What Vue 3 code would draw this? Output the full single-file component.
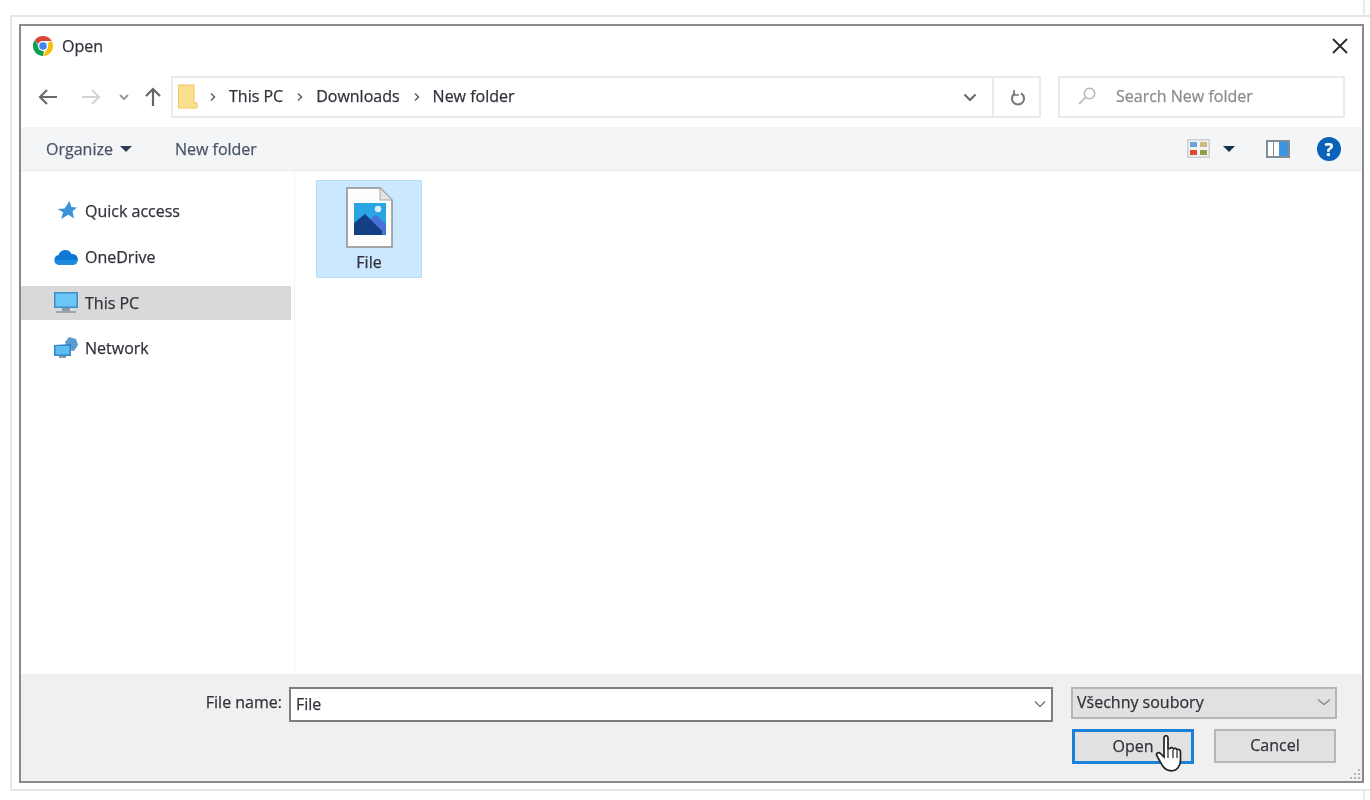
<script setup>
const crumbs = ['This PC', 'Downloads', 'New folder'];
const places = [
  { name: 'Quick access', icon: 'star' },
  { name: 'OneDrive', icon: 'cloud' },
  { name: 'This PC', icon: 'pc', active: true },
  { name: 'Network', icon: 'net' }
];
</script>

<template>
  <div class="page">
    <div class="tick"></div>
    <div class="frame">
      <div class="dialog">
        <div class="titlebar">
          <svg class="chrome" width="20" height="20" viewBox="0 0 20 20">
            <path fill="#db4437" d="M10 0a10 10 0 0 1 8.7 5H10a5 5 0 0 0-4.8 3.6L1.9 4.1A10 10 0 0 1 10 0z"/>
            <path fill="#f4c20d" d="M18.7 5A10 10 0 0 1 10 20l4.3-7.5A5 5 0 0 0 14.3 7.5L18.7 5z"/>
            <path fill="#0f9d58" d="M1.9 4.1l4.3 7.5A5 5 0 0 0 11 14.9L10 20A10 10 0 0 1 1.9 4.1z"/>
            <circle cx="10" cy="10" r="5" fill="#fff"/>
            <circle cx="10" cy="10" r="3.8" fill="#4285f4"/>
          </svg>
          <span class="title">Open</span>
          <svg class="close" width="16" height="16" viewBox="0 0 16 16"><path d="M1 1l14 14M15 1L1 15" stroke="#2b2b2b" stroke-width="1.8" fill="none"/></svg>
        </div>

        <div class="navrow">
          <div class="navbtns">
            <svg width="20" height="18" viewBox="0 0 20 18"><path d="M19 9H2M9 2L2 9l7 7" fill="none" stroke="#6b6b6b" stroke-width="2.2"/></svg>
            <svg class="fwd" width="20" height="18" viewBox="0 0 20 18"><path d="M1 9h17M11 2l7 7-7 7" fill="none" stroke="#d4d4d4" stroke-width="2"/></svg>
            <svg class="hist" width="12" height="8" viewBox="0 0 12 8"><path d="M2 2l4 4 4-4" fill="none" stroke="#9a9a9a" stroke-width="2"/></svg>
            <svg class="up" width="18" height="20" viewBox="0 0 18 20"><path d="M9 19V2M2 9l7-7 7 7" fill="none" stroke="#666" stroke-width="2.2"/></svg>
          </div>
          <div class="address">
            <svg class="folder" width="20" height="25" viewBox="0 0 20 25">
              <path fill="#fbdf8e" stroke="#efc75e" d="M.5 1H16v17l3 1v5H.5z"/>
            </svg>
            <template v-for="c in crumbs" :key="c">
              <svg class="sep" width="8" height="10" viewBox="0 0 8 10"><path d="M2 1.5L5.5 5 2 8.5" fill="none" stroke="#666" stroke-width="1.6"/></svg>
              <span class="crumb">{{ c }}</span>
            </template>
            <div class="addr-drop">
              <svg width="14" height="9" viewBox="0 0 14 9"><path d="M1.5 1.5L7 7l5.5-5.5" fill="none" stroke="#666" stroke-width="2"/></svg>
            </div>
            <div class="addr-refresh">
              <svg width="16" height="17" viewBox="0 0 16 17"><path d="M5 4.4a6 6 0 1 0 6 0" fill="none" stroke="#777" stroke-width="2"/><path d="M4 1v5h5" fill="none" stroke="#777" stroke-width="1.6"/></svg>
            </div>
          </div>
          <div class="search">
            <svg width="20" height="20" viewBox="0 0 20 20"><circle cx="12.5" cy="7.5" r="5.2" fill="none" stroke="#b8b8b8" stroke-width="1.5"/><path d="M8.5 11.5L2 18" stroke="#c9c0b8" stroke-width="2"/></svg>
            <span>Search New folder</span>
          </div>
        </div>

        <div class="toolbar">
          <span class="tool">Organize</span>
          <span class="caret"></span>
          <span class="tool newfolder">New folder</span>
          <div class="tool-right">
            <svg width="23" height="19" viewBox="0 0 23 19">
              <rect width="23" height="19" fill="#cfcfcf"/>
              <rect x="1.5" y="1.5" width="20" height="16" fill="#f2f2f2"/>
              <rect x="3" y="3" width="7" height="5" fill="#6aa5d8"/><rect x="13" y="3" width="7" height="5" fill="#c9bd84"/>
              <rect x="3" y="11" width="7" height="5" fill="#dc4a34"/><rect x="13" y="11" width="7" height="5" fill="#8ea04a"/>
            </svg>
            <span class="caret dark"></span>
            <svg class="pane" width="24" height="18" viewBox="0 0 24 18">
              <rect width="24" height="18" fill="#808c96"/>
              <rect x="2" y="2" width="5" height="14" fill="#fff"/><rect x="8" y="2" width="5" height="14" fill="#fff"/>
              <rect x="13" y="2" width="9" height="14" fill="#3d95e0"/>
            </svg>
            <div class="help">?</div>
          </div>
        </div>

        <div class="body">
          <div class="sidebar">
            <div v-for="p in places" :key="p.name" class="place" :class="{ active: p.active }">
              <div class="place-icon">
                <svg v-if="p.icon === 'star'" class="star" width="20" height="20" viewBox="0 0 20 20"><path fill="#3a94dc" d="M12.5 0l1.8 6 5.7.4-4.500 3.900 1.500 7.200-5.600-3.700L4 18l2.200-6.800L.5 8l7-.6z"/></svg>
                <svg v-else-if="p.icon === 'cloud'" width="24" height="16" viewBox="0 0 24 16"><path fill="#0f78d4" d="M5 16a5 5 0 0 1-.4-9.900A7 7 0 0 1 17.600 5 5.500 5.500 0 0 1 19 16z"/><path fill="#2a9be8" d="M0.5 11A5 5 0 0 0 5 16h14a5 5 0 0 0 4.700-5z" opacity=".55"/></svg>
                <svg v-else-if="p.icon === 'pc'" width="24" height="24" viewBox="0 0 24 24"><rect x="0" y="1" width="24" height="16" fill="#3a8fc4"/><rect x="1.5" y="2.500" width="21" height="13" fill="#6cc6f4"/><rect x="8" y="17" width="8" height="3" fill="#8a9aa6"/><rect x="2" y="20" width="20" height="2" fill="#9aa6b0"/></svg>
                <svg v-else width="24" height="24" viewBox="0 0 24 24"><path fill="#5a9ccf" d="M11 6l4-5 7 2 2 6-4 6-6-1z"/><path fill="#2f86c6" d="M0 9l17-1v12H0z"/><rect x="1.5" y="10" width="14" height="8.500" fill="#5dbcf0"/><rect x="5" y="20" width="7" height="2" fill="#8a9aa6"/></svg>
              </div>
              <span>{{ p.name }}</span>
            </div>
          </div>
          <div class="files">
            <div class="file">
              <svg width="47" height="61" viewBox="0 0 47 61">
                <path d="M1 1h33l12 12v47H1z" fill="#fdfdfd" stroke="#8f8f8f" stroke-width="1.5"/>
                <path d="M34 1v12h12z" fill="#e3e3e3" stroke="#a9a9a9"/>
                <rect x="8" y="16" width="32" height="32" fill="#29a4e4"/>
                <circle cx="32" cy="22" r="3.2" fill="#d8f0fb"/>
                <path d="M24 32l6-4 10 9v11H24z" fill="#4a72d6"/>
                <path d="M8 36l11-9 17 17v4H8z" fill="#143f85"/>
              </svg>
              <span>File</span>
            </div>
          </div>
        </div>

        <div class="footer">
          <div class="name-row">
            <label class="name-label">File name:</label>
            <div class="name-input">
              <span>File</span>
              <svg width="12" height="8" viewBox="0 0 12 8"><path d="M1 1.5l5 5 5-5" fill="none" stroke="#777" stroke-width="1.4"/></svg>
            </div>
            <div class="type-select">
              <span>Všechny soubory</span>
              <svg width="14" height="8" viewBox="0 0 14 8"><path d="M1 1.5l6 5 6-5" fill="none" stroke="#888" stroke-width="1.4"/></svg>
            </div>
          </div>
          <div class="actions">
            <div class="btn primary">
              <span>Open</span>
              <svg class="hand" width="28" height="38" viewBox="0 0 28 38">
                <path d="M9 3c0-3 4-3 4 0v11l2-.5c1-1.500 3-1 3.500.5 1-1 3-.8 3.500.8 1.500-.8 3.500 0 3.500 2v8c0 6-3 11-9 11-4.500 0-7-2-9-5L2 21c-1.500-2.500 1.500-4.500 3.500-2.500L9 22z" fill="#fff" stroke="#222" stroke-width="1.7"/>
                <path d="M13 15v8M18 15v8M22 16v7" stroke="#222" stroke-width="1.2" fill="none"/>
              </svg>
            </div>
            <div class="btn"><span>Cancel</span></div>
          </div>
          <svg class="grip" width="12" height="12" viewBox="0 0 12 12">
            <g fill="#b5b5b5"><rect x="9" y="1" width="2" height="2"/><rect x="5" y="5" width="2" height="2"/><rect x="9" y="5" width="2" height="2"/><rect x="1" y="9" width="2" height="2"/><rect x="5" y="9" width="2" height="2"/><rect x="9" y="9" width="2" height="2"/></g>
          </svg>
        </div>
      </div>
    </div>
    <div class="tick"></div>
  </div>
</template>

<style scoped>
.page {
  width: 1370px;
  height: 800px;
  overflow: hidden;
  display: flex;
  flex-direction: column;
  background: #fff;
  color: #32323c;
  font-family: "Open Sans", "Noto Sans", sans-serif;
  font-size: 16px;
  -webkit-text-stroke: 0.25px currentColor;
  filter: blur(0.6px);
}
.tick {
  width: 1365px;
  height: 15px;
  flex: none;
  border-right: 2px solid #e8eaee;
  box-sizing: border-box;
}
.tick:last-child {
  height: 9px;
}
.frame {
  margin-left: 10px;
  height: 776px;
  flex: none;
  box-sizing: border-box;
  border: 2px solid #e4e6ea;
  border-right: none;
  padding: 7px 0 0 7px;
}
.dialog {
  width: 1345px;
  height: 759px;
  box-sizing: border-box;
  border: 2px solid #8a8a8a;
  display: flex;
  flex-direction: column;
  background: #fff;
}
.titlebar {
  height: 44px;
  flex: none;
  display: flex;
  align-items: center;
  padding: 0 14px 5px 12px;
  box-sizing: border-box;
}
.chrome {
  margin-right: 9px;
}
.title {
  flex: 1;
}
.navrow {
  height: 57px;
  flex: none;
  display: flex;
  padding-top: 6px;
  box-sizing: border-box;
}
.navbtns {
  width: 150px;
  height: 42px;
  flex: none;
  display: flex;
  align-items: center;
  padding-left: 17px;
  box-sizing: border-box;
}
.fwd {
  margin-left: 23px;
}
.hist {
  margin-left: 17px;
}
.up {
  margin-left: 14px;
}
.address {
  width: 870px;
  height: 42px;
  flex: none;
  box-sizing: border-box;
  border: 2px solid #e8eaec;
  display: flex;
  align-items: center;
  padding-left: 5px;
  line-height: 36px;
}
.crumb {
  margin-right: 13px;
  padding-bottom: 2px;
}
.folder {
  margin-right: 11px;
  margin-bottom: 2px;
}
.sep {
  margin-right: 12px;
}
.addr-drop {
  margin-left: auto;
  width: 44px;
  height: 100%;
  display: flex;
  align-items: center;
  justify-content: center;
  border-right: 2px solid #e8eaec;
}
.addr-refresh {
  width: 45px;
  height: 100%;
  display: flex;
  align-items: center;
  justify-content: center;
  padding-left: 3px;
  box-sizing: border-box;
}
.search {
  margin-left: 17px;
  width: 287px;
  height: 42px;
  box-sizing: border-box;
  border: 2px solid #e8eaec;
  display: flex;
  align-items: center;
  padding: 0 0 2px 17px;
  color: #8b8b8f;
  gap: 19px;
}
.toolbar {
  height: 44px;
  flex: none;
  background: #f4f5f7;
  border-bottom: 1px solid #e8eaec;
  box-sizing: border-box;
  display: flex;
  align-items: center;
  padding: 0 21px 0 25px;
  color: #4a5568;
}
.caret {
  width: 0;
  height: 0;
  border-left: 6px solid transparent;
  border-right: 6px solid transparent;
  border-top: 6px solid #2c3e55;
  margin-left: 7px;
}
.newfolder {
  margin-left: 43px;
}
.tool-right {
  margin-left: auto;
  display: flex;
  align-items: center;
}
.caret.dark {
  margin-left: 13px;
  border-top-color: #17324f;
}
.pane {
  margin-left: 31px;
}
.help {
  margin-left: 27px;
  width: 24px;
  height: 24px;
  border-radius: 50%;
  background: #0a62b8;
  color: #fff;
  font-weight: 700;
  font-size: 18px;
  line-height: 24px;
  text-align: center;
}
.body {
  flex: 1;
  display: flex;
  min-height: 0;
}
.sidebar {
  width: 274px;
  flex: none;
  box-sizing: border-box;
  padding-top: 23px;
  border-right: 1px solid #f4f4f4;
  display: flex;
  flex-direction: column;
  gap: 12px;
}
.place {
  width: 270px;
  height: 34px;
  display: flex;
  align-items: center;
}
.place:last-child {
  margin-top: -1px;
}
.place.active {
  background: #d9d9d9;
}
.place-icon {
  width: 64px;
  padding-left: 33px;
  box-sizing: border-box;
  display: flex;
  flex: none;
  align-items: center;
  justify-content: flex-start;
}
.star {
  margin-left: 3px;
}
.files {
  flex: 1;
  padding: 9px 0 0 21px;
}
.file {
  width: 106px;
  height: 98px;
  box-sizing: border-box;
  background: #cce8ff;
  border: 1px solid #b5dcf8;
  display: flex;
  flex-direction: column;
  align-items: center;
  padding-top: 6px;
  gap: 3px;
}
.footer {
  height: 107px;
  flex: none;
  position: relative;
  background: #f0f0f0;
  box-sizing: border-box;
  padding: 13px 25px 0 0;
}
.name-row {
  display: flex;
  align-items: flex-start;
  justify-content: flex-end;
}
.name-label {
  line-height: 30px;
  margin-right: 7px;
}
.name-input {
  width: 764px;
  height: 35px;
  box-sizing: border-box;
  border: 2px solid #7d7d7d;
  background: #fff;
  display: flex;
  align-items: center;
  justify-content: space-between;
  padding: 0 5px 2px;
  margin-right: 18px;
}
.type-select {
  width: 266px;
  height: 32px;
  box-sizing: border-box;
  border: 2px solid #b6b6b6;
  background: #e1e1e1;
  display: flex;
  align-items: center;
  justify-content: space-between;
  padding: 0 4px 2px;
}
.actions {
  margin-top: 7px;
  display: flex;
  justify-content: flex-end;
  gap: 20px;
  padding-right: 1px;
}
.btn {
  width: 122px;
  height: 34px;
  box-sizing: border-box;
  border: 2px solid #b6b6b6;
  background: #e1e1e1;
  display: flex;
  align-items: center;
  justify-content: center;
  padding-bottom: 2px;
  position: relative;
}
.btn.primary {
  height: 35px;
  border: 3px solid #1a80d8;
}
.hand {
  position: absolute;
  left: 80px;
  top: 3px;
}
.grip {
  position: absolute;
  right: 1px;
  bottom: 1px;
}
</style>

<style>
html, body {
  background: #fff;
}
</style>
